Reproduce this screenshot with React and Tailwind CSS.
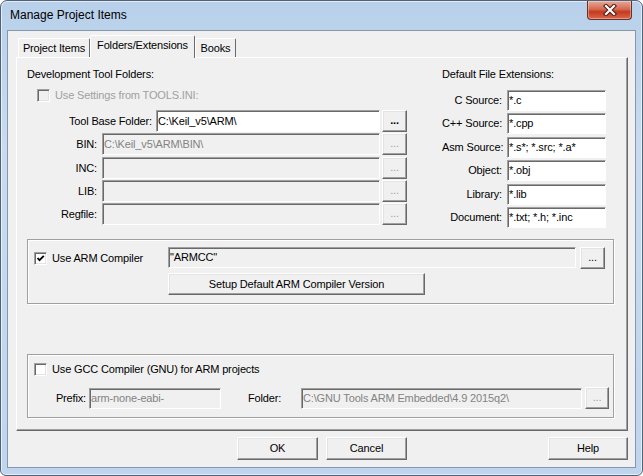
import React from 'react';

const Field = ({ className = '', value, disabled, muted }) => (
  <div
    className={`${className} flex items-center overflow-hidden whitespace-nowrap border border-t-[#a0a0a0] border-l-[#a0a0a0] border-r-white border-b-white pl-[1px] shadow-[inset_1px_1px_0_#696969] ${
      disabled ? 'bg-[#f0f0f0]' : 'bg-white'
    } ${muted ? 'text-[#838383]' : 'text-black'}`}
  >
    {value}
  </div>
);

const Btn = ({ className = '', children, disabled }) => (
  <div
    className={`${className} flex items-center justify-center border border-t-white border-l-white border-r-[#696969] border-b-[#696969] bg-[#f0f0f0] shadow-[inset_-1px_-1px_0_#a0a0a0,inset_1px_1px_0_#e3e3e3] ${
      disabled ? 'text-[#a0a0a0]' : 'text-black'
    }`}
  >
    {children}
  </div>
);

const Dots = ({ disabled }) => (
  <Btn className="w-[25px] h-[22px]" disabled={disabled}>
    <span className={`leading-none pb-[2px] ${disabled ? '' : 'font-bold'}`}>...</span>
  </Btn>
);

const Check = ({ checked, disabled }) => (
  <div
    className={`w-[13px] h-[13px] shrink-0 flex items-center justify-center border border-t-[#a0a0a0] border-l-[#a0a0a0] border-r-white border-b-white shadow-[inset_1px_1px_0_#696969,inset_-1px_-1px_0_#e3e3e3] ${
      disabled ? 'bg-[#f0f0f0]' : 'bg-white'
    }`}
  >
    {checked && (
      <svg width="9" height="9" viewBox="0 0 9 9">
        <path d="M1.5 4 L3.5 6.2 L7.8 1.8" fill="none" stroke="#000" strokeWidth="1.8" />
      </svg>
    )}
  </div>
);

const Tab = ({ label, active, className = '' }) => (
  <div
    className={`${className} flex items-center justify-center rounded-t-[2px] border-t border-l border-r border-t-white border-l-white border-r-[#696969] bg-[#f0f0f0] ${
      active ? 'h-[23px] pb-[3px]' : 'h-[19px] mb-[1px]'
    }`}
  >
    {label}
  </div>
);

export default function App() {
  const toolRows = [
    { label: 'BIN:', value: 'C:\\Keil_v5\\ARM\\BIN\\', mt: 'mt-[1px]' },
    { label: 'INC:', value: '', mt: 'mt-[2px]' },
    { label: 'LIB:', value: '', mt: 'mt-[1px]' },
    { label: 'Regfile:', value: '', mt: 'mt-[1px]' },
  ];

  const extRows = [
    { label: 'C Source:', value: '*.c', mt: 'mt-[9px]' },
    { label: 'C++ Source:', value: '*.cpp', mt: 'mt-[2px]' },
    { label: 'Asm Source:', value: '*.s*; *.src; *.a*', mt: 'mt-[3px]' },
    { label: 'Object:', value: '*.obj', mt: 'mt-[2px]' },
    { label: 'Library:', value: '*.lib', mt: 'mt-[3px]' },
    { label: 'Document:', value: '*.txt; *.h; *.inc', mt: 'mt-[2px]' },
  ];

  return (
    <div className="w-[643px] h-[476px] font-['Liberation_Sans',Arial,sans-serif] text-[11px] tracking-[-0.15px] text-black">
      <div className="w-[643px] h-[476px] flex flex-col rounded-t-[7px] rounded-b-[6px] border border-[#50627a] bg-[linear-gradient(to_bottom,#b8d0ea,#c8dbf0_30%,#bfd5ee)] shadow-[inset_0_0_0_1px_rgba(255,255,255,0.6)]">
        {/* Title bar */}
        <div className="h-[29px] flex items-start justify-between">
          <div className="pl-[9px] pt-[6px] text-[12px] leading-[16px] tracking-normal">Manage Project Items</div>
          <div className="mr-[10px] w-[45px] h-[19px] flex items-center justify-center rounded-b-[4px] border border-t-0 border-[#6b2f25] bg-[linear-gradient(to_bottom,#e8a898,#d46b52_45%,#c4391f_60%,#d9684d)] shadow-[inset_0_0_0_1px_rgba(255,255,255,0.35)]">
            <svg width="14" height="12" viewBox="0 0 14 12">
              <path d="M3 2 L11 10 M11 2 L3 10" stroke="#4a1a12" strokeWidth="4.2" strokeLinecap="square" />
              <path d="M3 2 L11 10 M11 2 L3 10" stroke="#fff" strokeWidth="2.2" strokeLinecap="square" />
            </svg>
          </div>
        </div>

        {/* Client area */}
        <div className="mx-[6px] h-[438px] border border-[#8696ab] bg-[#f0f0f0] flex flex-col">
          {/* Tabs */}
          <div className="relative z-10 pl-[10px] pt-[4px] h-[27px] flex items-end">
            <Tab label="Project Items" className="w-[72px]" />
            <Tab label="Folders/Extensions" active className="w-[105px]" />
            <Tab label="Books" className="w-[41px]" />
          </div>

          {/* Panel */}
          <div className="ml-[8px] mt-[-1px] w-[612px] h-[374px] border border-t-white border-l-white border-r-[#696969] border-b-[#696969] shadow-[inset_-1px_-1px_0_#a0a0a0] flex flex-col">
            <div className="flex pl-[10px]">
              {/* Development tool folders */}
              <div className="w-[380px] flex flex-col">
                <div className="mt-[9px] h-[14px] leading-[14px]">Development Tool Folders:</div>
                <div className="mt-[8px] h-[13px] flex items-center">
                  <div className="ml-[10px]">
                    <Check disabled />
                  </div>
                  <span className="ml-[5px] text-[#a0a0a0]">Use Settings from TOOLS.INI:</span>
                </div>
                <div className="mt-[8px] h-[22px] flex items-center">
                  <div className="w-[125px] text-right">Tool Base Folder:</div>
                  <Field className="ml-[4px] w-[224px] h-[22px]" value="C:\Keil_v5\ARM\" />
                  <div className="ml-[2px]">
                    <Dots />
                  </div>
                </div>
                {toolRows.map((row) => (
                  <div key={row.label} className={`${row.mt} h-[22px] flex items-center`}>
                    <div className="w-[70px] text-right">{row.label}</div>
                    <Field className="ml-[5px] w-[278px] h-[22px]" value={row.value} disabled muted />
                    <div className="ml-[2px]">
                      <Dots disabled />
                    </div>
                  </div>
                ))}
              </div>

              {/* Default file extensions */}
              <div className="ml-[35px] w-[164px] flex flex-col">
                <div className="mt-[9px] h-[14px] leading-[14px]">Default File Extensions:</div>
                {extRows.map((row) => (
                  <div key={row.label} className={`${row.mt} h-[21px] flex items-center`}>
                    <div className="w-[60px] text-right whitespace-nowrap">{row.label}</div>
                    <Field className="ml-[5px] w-[99px] h-[21px]" value={row.value} />
                  </div>
                ))}
              </div>
            </div>

            {/* ARM compiler group */}
            <div className="ml-[10px] mt-[11px] w-[587px] h-[65px] border border-[#a0a0a0] shadow-[inset_1px_1px_0_#fff,1px_1px_0_#fff] flex">
              <div className="w-[140px] pt-[12px] pl-[6px] flex items-start">
                <Check checked />
                <span className="ml-[5px] leading-[13px]">Use ARM Compiler</span>
              </div>
              <div className="pt-[7px] flex flex-col">
                <div className="flex items-start">
                  <Field className="w-[408px] h-[21px]" value={'"ARMCC"'} disabled />
                  <div className="ml-[4px]">
                    <Btn className="w-[25px] h-[22px]">
                      <span className="leading-none pb-[2px]">...</span>
                    </Btn>
                  </div>
                </div>
                <Btn className="mt-[4px] w-[257px] h-[22px]">Setup Default ARM Compiler Version</Btn>
              </div>
            </div>

            {/* GCC compiler group */}
            <div className="ml-[10px] mt-[50px] w-[587px] h-[64px] border border-[#a0a0a0] shadow-[inset_1px_1px_0_#fff,1px_1px_0_#fff] flex flex-col">
              <div className="pt-[8px] pl-[6px] flex items-center">
                <Check />
                <span className="ml-[5px] leading-[13px]">Use GCC Compiler (GNU) for ARM projects</span>
              </div>
              <div className="mt-[11px] h-[22px] flex items-center">
                <div className="w-[58px] text-right">Prefix:</div>
                <Field className="ml-[3px] w-[132px] h-[21px]" value="arm-none-eabi-" disabled muted />
                <div className="ml-[27px] w-[53px]">Folder:</div>
                <Field className="w-[281px] h-[21px]" value="C:\GNU Tools ARM Embedded\4.9 2015q2\" disabled muted />
                <div className="ml-[3px]">
                  <Btn className="w-[24px] h-[22px]" disabled>
                    <span className="leading-none pb-[2px]">...</span>
                  </Btn>
                </div>
              </div>
            </div>
          </div>

          {/* Dialog buttons */}
          <div className="mt-[6px] flex">
            <Btn className="ml-[229px] w-[81px] h-[23px]">OK</Btn>
            <Btn className="ml-[8px] w-[81px] h-[23px]">Cancel</Btn>
            <Btn className="ml-[141px] w-[80px] h-[23px]">Help</Btn>
          </div>
        </div>
      </div>
    </div>
  );
}
